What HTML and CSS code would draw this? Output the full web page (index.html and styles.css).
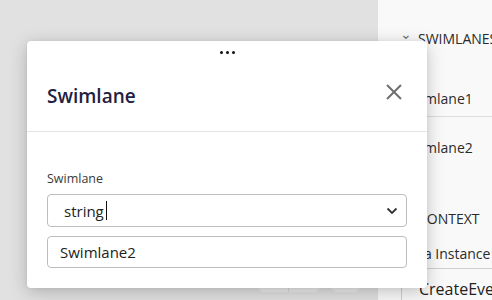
FILE: index.html
```html
<!DOCTYPE html>
<html>
<head>
<meta charset="utf-8">
<link rel="stylesheet" href="styles.css">
</head>
<body>
<div class="app">
  <div class="canvas">
    <div class="toolbar">
      <div class="tb-group">
        <span class="tb-btn"></span>
        <span class="tb-btn"></span>
      </div>
      <div class="tb-group single">
        <span class="tb-btn"></span>
      </div>
    </div>
  </div>
  <aside class="panel">
    <div class="sec-head"><span class="chev">⌄</span>SWIMLANES</div>
    <div class="item first">Swimlane1</div>
    <div class="item second">Swimlane2</div>
    <div class="sec-head ctx">CONTEXT</div>
    <div class="item inst">Data Instance</div>
    <div class="rowline">
      <div class="gutter"></div>
      <div class="cell">CreateEvent</div>
    </div>
  </aside>
  <div class="modal">
    <div class="grip"><span></span><span></span><span></span></div>
    <div class="modal-header">
      <h2 class="title">Swimlane</h2>
      <svg class="close" width="16" height="16" viewBox="0 0 16 16"><path d="M1 1 L15 15 M15 1 L1 15" stroke="#6f6f6f" stroke-width="2" fill="none"/></svg>
    </div>
    <div class="modal-body">
      <label class="label">Swimlane</label>
      <div class="select">
        <span class="value">string</span><span class="caret"></span>
        <svg class="chevron" width="12" height="8" viewBox="0 0 12 8"><path d="M1.5 1.5 L6 6 L10.5 1.5" stroke="#333" stroke-width="1.8" fill="none"/></svg>
      </div>
      <div class="input">Swimlane2</div>
    </div>
  </div>
</div>
</body>
</html>
```
FILE: styles.css
```css
* { box-sizing: border-box; }
html, body { margin: 0; padding: 0; }
body {
  width: 492px;
  height: 300px;
  overflow: hidden;
  font-family: "Open Sans", "Noto Sans", sans-serif;
}
.app {
  position: relative;
  display: flex;
  width: 492px;
  height: 300px;
}
.canvas {
  flex: 0 0 378px;
  background: #e1e1e1;
  display: flex;
  flex-direction: column;
  justify-content: flex-end;
}
.toolbar {
  display: flex;
  gap: 9px;
  padding-left: 257px;
  padding-bottom: 8px;
}
.tb-group {
  display: flex;
  background: #ececec;
  border-radius: 0 0 8px 8px;
  height: 24px;
}
.tb-btn {
  width: 32px;
  border-right: 1px solid #d8d8d8;
}
.tb-btn:last-child { border-right: none; }
.tb-group.single .tb-btn { width: 31px; }
.panel {
  flex: 1;
  min-width: 0;
  background: #f9f9f9;
  color: #2b2b2b;
  font-size: 14px;
  display: flex;
  flex-direction: column;
  white-space: nowrap;
  overflow: hidden;
}
.sec-head {
  padding: 28px 0 0 40px;
  line-height: 22px;
  height: 56px;
  position: relative;
}
.chev {
  position: absolute;
  left: 22px;
  top: 23px;
  font-size: 14px;
  color: #777;
}
.item {
  padding-left: 24px;
  line-height: 22px;
}
.item.first {
  height: 61px;
  padding-top: 32px;
  border-bottom: 1px solid #dcdcdc;
}
.item.second {
  padding-top: 20px;
  height: 85px;
}
.sec-head.ctx {
  height: 36px;
  padding-top: 7px;
}
.item.inst {
  height: 32px;
  padding-top: 6px;
  padding-left: 23px;
  border-bottom: 1px solid #cfcfcf;
}
.rowline {
  flex: 1;
  display: flex;
  min-width: 0;
}
.gutter {
  flex: 0 0 24px;
  border-right: 1px solid #cfcfcf;
}
.cell {
  padding-left: 17px;
  padding-top: 9px;
  font-size: 16px;
  color: #222;
  line-height: 22px;
}
.modal {
  position: absolute;
  left: 27px;
  top: 41px;
  width: 400px;
  height: 247px;
  background: #fff;
  border-radius: 4px;
  box-shadow: 0 4px 18px rgba(0,0,0,0.22), 0 0 4px rgba(0,0,0,0.06);
  display: flex;
  flex-direction: column;
}
.grip {
  height: 22px;
  display: flex;
  justify-content: center;
  gap: 3px;
  padding-top: 10px;
}
.grip span {
  width: 3px;
  height: 3px;
  border-radius: 50%;
  background: #111;
}
.modal-header {
  height: 69px;
  border-bottom: 1px solid #e3e3e3;
  display: flex;
  justify-content: space-between;
  align-items: flex-start;
  padding: 20px 25px 0 20px;
}
.title {
  margin: 0;
  font-size: 19px;
  font-weight: 600;
  line-height: 26px;
  color: #23203f;
}
.close {
  margin-top: 1px;
  width: 16px;
  height: 16px;
}
.modal-body {
  padding: 38px 20px 0 20px;
  display: flex;
  flex-direction: column;
}
.label {
  font-size: 12.5px;
  color: #3a3a3a;
  line-height: 17px;
  height: 24px;
}
.select {
  height: 33px;
  border: 1px solid #bdbdbd;
  border-radius: 4px;
  display: flex;
  align-items: center;
  padding-left: 16px;
  padding-right: 8px;
  font-size: 15px;
  color: #222;
}
.caret {
  width: 1px;
  height: 19px;
  background: #111;
  margin-left: 2px;
}
.chevron { margin-left: auto; }
.input {
  margin-top: 9px;
  height: 32px;
  border: 1px solid #bdbdbd;
  border-radius: 4px;
  padding-left: 12px;
  font-size: 15px;
  line-height: 30px;
  color: #222;
}
```
